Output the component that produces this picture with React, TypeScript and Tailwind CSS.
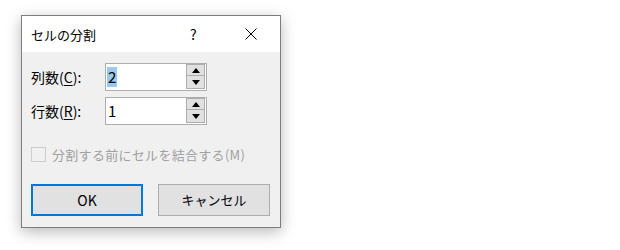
import React from "react";

const font = { fontFamily: '"Noto Sans CJK JP", "Noto Sans", sans-serif' };

function Spin({ value, selected }: { value: string; selected?: boolean }) {
  return (
    <div className="flex h-[28px] w-[102px] border border-[#adadad] bg-white">
      <div className="flex flex-1 items-center pl-[1px]">
        <span
          className={
            selected
              ? "bg-[#99c9ef] px-[1px] text-[15px] leading-[20px] text-black"
              : "px-[1px] text-[15px] leading-[20px] text-black"
          }
        >
          {value}
        </span>
      </div>
      <div className="flex w-[20px] flex-col pr-[1px]">
        <div className="flex h-[12px] items-center justify-center border border-[#adadad] bg-[#e1e1e1]">
          <svg width="8" height="5" viewBox="0 0 8 5">
            <polygon points="0,5 8,5 4,0" fill="#000" />
          </svg>
        </div>
        <div className="flex h-[13px] items-center justify-center border border-[#adadad] border-t-0 bg-[#e1e1e1]">
          <svg width="8" height="5" viewBox="0 0 8 5">
            <polygon points="0,0 8,0 4,5" fill="#000" />
          </svg>
        </div>
      </div>
    </div>
  );
}

export default function App() {
  return (
    <div className="h-[250px] w-[620px] bg-white" style={font}>
      <div className="pl-[21px] pt-[15px]">
        <div className="flex h-[213px] w-[260px] flex-col border border-[#7d7d7d] bg-[#f0f0f0] shadow-[0_4px_14px_rgba(0,0,0,0.28)]">
          <div className="flex h-[36px] items-center bg-white pl-[9px] text-[13px] text-black">
            <span className="flex-1 pt-[1px]">セルの分割</span>
            <span className="w-[20px] text-[14px]">?</span>
            <svg className="ml-[35px] mr-[23px]" width="12" height="12" viewBox="0 0 12 12">
              <path d="M0.5 0.5 L11.5 11.5 M11.5 0.5 L0.5 11.5" stroke="#000" strokeWidth="1" />
            </svg>
          </div>
          <div className="flex flex-1 flex-col px-[9px] pt-[11px]">
            <div className="flex flex-col gap-[6px]">
              <div className="flex items-center">
                <span className="w-[74px] text-[14px] text-black">
                  列数(<span className="underline underline-offset-2">C</span>):
                </span>
                <Spin value="2" selected />
              </div>
              <div className="flex items-center">
                <span className="w-[74px] text-[14px] text-black">
                  行数(<span className="underline underline-offset-2">R</span>):
                </span>
                <Spin value="1" />
              </div>
            </div>
            <div className="mt-[22px] flex h-[15px] items-center">
              <div className="h-[15px] w-[15px] border border-[#cccccc] bg-[#f0f0f0]" />
              <span className="ml-[6px] text-[13px] tracking-[0.3px] text-[#a0a0a0]">分割する前にセルを結合する(M)</span>
            </div>
            <div className="mt-[22px] flex gap-[15px]">
              <div className="flex h-[32px] w-[112px] items-center justify-center border-2 border-[#0078d7] bg-[#e1e1e1] text-[14px] text-black">
                OK
              </div>
              <div className="flex h-[32px] w-[112px] items-center justify-center border border-[#adadad] bg-[#e1e1e1] text-[13px] text-black">
                キャンセル
              </div>
            </div>
          </div>
        </div>
      </div>
    </div>
  );
}
